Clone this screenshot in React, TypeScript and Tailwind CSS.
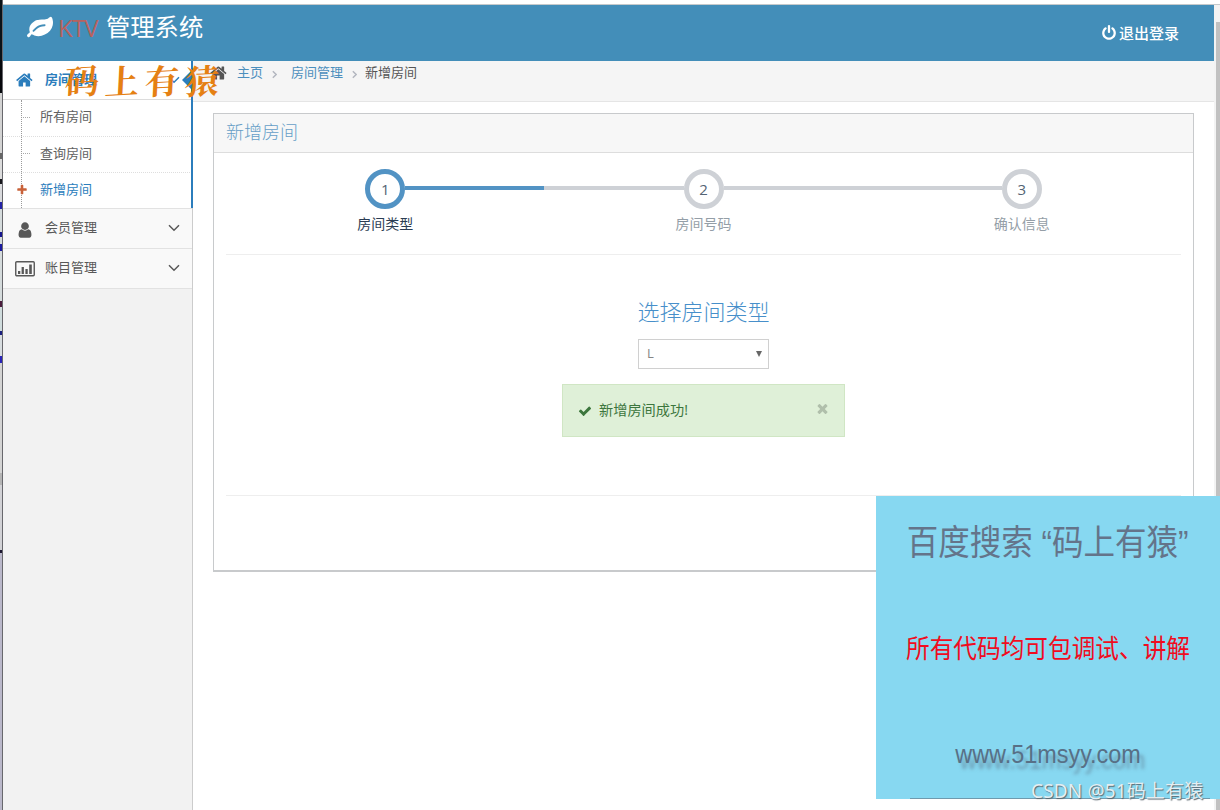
import React from "react";

const PATHS = {
  leaf: "M1280 704q0-26-19-45t-45-19q-172 0-318 49.5t-259.5 134-235.5 219.5q-19 21-19 45 0 26 19 45t45 19q24 0 45-19 27-24 74-71t67-66q137-124 268.5-176t313.5-52q26 0 45-19t19-45zm512-198q0 95-20 193-46 224-184.5 383t-357.5 268q-214 108-438 108-148 0-286-47-15-5-88-42t-96-37q-16 0-39.5 32t-45 70-52.5 70-60 32q-43 0-63.5-17.5t-45.5-59.5q-2-4-6-11t-5.5-10-3-9.5-1.5-13.5q0-35 31-73.5t68-65.5 68-56 31-48q0-4-14-38t-16-44q-9-51-9-104 0-115 43.5-220t119-184.5 170.5-139 204-95.5q55-18 145-25.5t179.5-9 178.5-6 163.5-24 113.5-56.5l29.5-29.5 29.5-28 27-20 36.5-16 43.5-4.5q39 0 70.5 46t47.5 112 24 124 8 96z",
  home: "M1408 992v480q0 26-19 45t-45 19h-384v-384h-256v384h-384q-26 0-45-19t-19-45v-480q0-1 .5-3t.5-3l575-474 575 474q1 2 1 6zm223-69l-62 74q-8 9-21 11h-3q-13 0-21-7l-692-577-692 577q-12 8-24 7-13-2-21-11l-62-74q-8-10-7-23.5t11-21.5l719-599q32-26 76-26t76 26l244 204v-195q0-14 9-23t23-9h192q14 0 23 9t9 23v408l219 182q10 8 11 21.5t-7 23.5z",
  user: "M1536 1399q0 109-62.5 187t-150.5 78h-854q-88 0-150.5-78t-62.5-187q0-85 8.5-160.5t31.5-152 58.5-131 94-89 134.5-34.5q131 128 313 128t313-128q76 0 134.5 34.5t94 89 58.5 131 31.5 152 8.5 160.5zm-256-887q0 159-112.5 271.5t-271.5 112.5-271.5-112.5-112.5-271.5 112.5-271.5 271.5-112.5 271.5 112.5 112.5 271.5z",
  plus: "M1600 736v192q0 40-28 68t-68 28h-416v416q0 40-28 68t-68 28h-192q-40 0-68-28t-28-68v-416h-416q-40 0-68-28t-28-68v-192q0-40 28-68t68-28h416v-416q0-40 28-68t68-28h192q40 0 68 28t28 68v416h416q40 0 68 28t28 68z",
  check: "M1671 566q0 40-28 68l-724 724-136 136q-28 28-68 28t-68-28l-136-136-362-362q-28-28-28-68t28-68l136-136q28-28 68-28t68 28l294 295 656-657q28-28 68-28t68 28l136 136q28 28 28 68z",
  times: "M1490 1322q0 40-28 68l-136 136q-28 28-68 28t-68-28l-294-294-294 294q-28 28-68 28t-68-28l-136-136q-28-28-28-68t28-68l294-294-294-294q-28-28-28-68t28-68l136-136q28-28 68-28t68 28l294 294 294-294q28-28 68-28t68 28l136 136q28 28 28 68t-28 68l-294 294 294 294q28 28 28 68z",
  power: "M1664 896q0 156-61 298t-164 245-245 164-298 61-298-61-245-164-164-245-61-298q0-182 80.5-343t226.5-270q43-32 95.5-25t83.5 50q32 42 24.5 94.5t-49.5 84.5q-98 74-151.5 181t-53.5 228q0 104 40.5 198.5t109.5 163.5 163.5 109.5 198.5 40.5 198.5-40.5 163.5-109.5 109.5-163.5 40.5-198.5q0-121-53.5-228t-151.5-181q-42-32-49.5-84.5t24.5-94.5q31-43 84-50t95 25q146 109 226.5 270t80.5 343zm-640-768v640q0 52-38 90t-90 38-90-38-38-90v-640q0-52 38-90t90-38 90 38 38 90z",
};

function Icon({ name, className }: { name: keyof typeof PATHS; className: string }) {
  return (
    <svg viewBox="0 0 1792 1792" fill="currentColor" className={`shrink-0 ${className}`}>
      <path d={PATHS[name]} />
    </svg>
  );
}

function ChartIcon() {
  return (
    <svg viewBox="0 0 20 16" className="h-4 w-5 shrink-0" fill="#585858">
      <rect x="0.75" y="0.75" width="18.5" height="14" rx="1" fill="none" stroke="#585858" strokeWidth="1.4" />
      <rect x="3" y="10" width="2.3" height="3" />
      <rect x="6.6" y="6" width="2.3" height="7" />
      <rect x="10.4" y="8" width="2.3" height="5" />
      <rect x="14.2" y="3.5" width="2.6" height="9.5" />
    </svg>
  );
}

function Angle({ dir, className }: { dir: "down" | "right"; className: string }) {
  return dir === "down" ? (
    <svg viewBox="0 0 12 8" className={className} fill="none" stroke="currentColor" strokeWidth="1.5">
      <path d="M1 1.2 6 6.2 11 1.2" />
    </svg>
  ) : (
    <svg viewBox="0 0 6 10" className={className} fill="none" stroke="currentColor" strokeWidth="1.7">
      <path d="M1 1 5 5 1 9" />
    </svg>
  );
}

/* Slice of the desktop windows visible behind the browser's left edge. */
const EDGE = [
  { h: 60, c: "bg-[#0a1218]" },
  { h: 33, c: "bg-[#06080c]" },
  { h: 60, c: "bg-[#d3d3d3]" },
  { h: 6, c: "bg-[#666666]" },
  { h: 20, c: "bg-[#dcdcdc]" },
  { h: 5, c: "bg-[#17171c]" },
  { h: 18, c: "bg-[#d9dadd]" },
  { h: 7, c: "bg-[#2423a8]" },
  { h: 23, c: "bg-[#d5dbdc]" },
  { h: 5, c: "bg-[#15158f]" },
  { h: 7, c: "bg-[#d5dbdc]" },
  { h: 7, c: "bg-[#1a1aa0]" },
  { h: 50, c: "bg-[#d5dbdc]" },
  { h: 6, c: "bg-[#4a1c3c]" },
  { h: 24, c: "bg-[#d0dcdd]" },
  { h: 4, c: "bg-[#1c2080]" },
  { h: 21, c: "bg-[#d8dde0]" },
  { h: 7, c: "bg-[#2a23b8]" },
  { h: 110, c: "bg-[#d4d4d4]" },
  { h: 12, c: "bg-[#b5b5b5]" },
  { h: 65, c: "bg-[#d2d2d6]" },
  { h: 3, c: "bg-[#1d1730]" },
  { h: 257, c: "bg-[#bab8ca]" },
];

const SUBMENU = [
  { label: "所有房间", active: false },
  { label: "查询房间", active: false },
  { label: "新增房间", active: true },
];

const STEPS = [
  { n: 1, label: "房间类型", left: "bg-transparent", right: "bg-[#5293c4]" },
  { n: 2, label: "房间号码", left: "bg-[#ced1d6]", right: "bg-[#ced1d6]" },
  { n: 3, label: "确认信息", left: "bg-[#ced1d6]", right: "bg-transparent" },
];

function Navbar() {
  return (
    <header className="flex h-14 shrink-0 items-start justify-between bg-[#438eb9] pl-6 pr-[35px] text-white">
      <div className="flex h-[45px] items-center text-2xl">
        <Icon name="leaf" className="h-[26px] w-[26px]" />
        <span className="ml-[5px] w-[42px] tracking-[-0.8px] text-[#b8625f]">KTV</span>
        <span className="ml-[6px] text-[24.3px]">管理系统</span>
      </div>
      <a className="flex h-14 items-center gap-[2px] text-[15px] font-medium">
        <Icon name="power" className="h-[16px] w-[16px]" />
        <span>退出登录</span>
      </a>
    </header>
  );
}

function Sidebar() {
  return (
    <aside className="relative flex w-[190px] shrink-0 flex-col border-r border-[#cccccc] bg-[#f2f2f2] text-[13px] text-[#585858]">
      <div className="relative flex h-[39px] items-center border-b border-[#dcdcdc] bg-white pl-[13px] font-bold text-[#2b7dbc]">
        <Icon name="home" className="h-[18px] w-[18px]" />
        <span className="-mt-[2px] ml-[11px] leading-4">房间管理</span>
        <Angle dir="down" className="ml-auto mr-3 h-2 w-3" />
        <svg viewBox="0 0 10 20" className="absolute right-0 top-[9px] h-5 w-[10px]" fill="#2b7dbc">
          <path d="M10 0 0 10 10 20Z" />
        </svg>
      </div>
      <ul className="relative bg-white">
        <li className="absolute bottom-0 left-[18px] top-0 border-l border-dotted border-[#9a9a9a]" />
        {SUBMENU.map((item, i) => (
          <li
            key={item.label}
            className={`flex h-9 items-center pb-[2px] ${i > 0 ? "border-t border-dotted border-[#dedede]" : ""} ${item.active ? "text-[#2b7dbc]" : "text-[#616161]"}`}
          >
            {item.active ? (
              <Icon name="plus" className="relative ml-[13px] mr-[12px] h-[12px] w-[12px] text-[#c86139]" />
            ) : (
              <span className="ml-[20px] mr-[10px] w-[7px] border-t border-dotted border-[#aaaaaa]" />
            )}
            <span>{item.label}</span>
          </li>
        ))}
      </ul>
      <div className="absolute -right-px top-0 h-[147px] w-[2px] bg-[#2b7dbc]" />
      <div className="flex h-10 items-center border-t border-[#e2e2e2] bg-[#f9f9f9] pl-[13px]">
        <Icon name="user" className="mt-[2px] h-[18px] w-[18px]" />
        <span className="-mt-px ml-[11px]">会员管理</span>
        <Angle dir="down" className="-mt-px ml-auto mr-3 h-2 w-3" />
      </div>
      <div className="flex h-[41px] items-center border-y border-[#e2e2e2] bg-[#f9f9f9] pl-3">
        <ChartIcon />
        <span className="-mt-px ml-[10px]">账目管理</span>
        <Angle dir="down" className="-mt-px ml-auto mr-3 h-2 w-3" />
      </div>
    </aside>
  );
}

function Breadcrumbs() {
  return (
    <nav className="h-[41px] border-b border-[#e5e5e5] bg-[#f5f5f5] pl-[17px] text-[13px] text-[#4c8fbd]">
      <div className="flex h-[24px] items-center">
        <Icon name="home" className="h-[18px] w-[18px] text-[#555555]" />
        <span className="ml-[9px]">主页</span>
        <Angle dir="right" className="ml-[9px] mt-[3px] h-[9px] w-[5px] text-[#b2b6bf]" />
        <span className="ml-[14px]">房间管理</span>
        <Angle dir="right" className="ml-[9px] mt-[3px] h-[9px] w-[5px] text-[#b2b6bf]" />
        <span className="ml-[8px] text-[#555555]">新增房间</span>
      </div>
    </nav>
  );
}

function Wizard() {
  return (
    <section className="ml-5 mt-[11px] flex h-[459px] w-[981px] flex-col border border-b-2 border-[#c8cacc] bg-white">
      <h1 className="h-[39px] shrink-0 border-b border-[#dddddd] bg-[#f7f7f7] pl-3 text-lg font-light leading-[37px] text-[#669fc7]">
        新增房间
      </h1>
      <div className="mx-3 flex flex-1 flex-col">
        <ol className="flex h-[102px] shrink-0 border-b border-[#eeeeee] pt-4">
          {STEPS.map((s) => (
            <li key={s.n} className="flex flex-1 flex-col items-center">
              <div className="flex w-full items-center">
                <span className={`-mt-[2px] h-1 flex-1 ${s.left}`} />
                <span
                  className={`flex h-10 w-10 items-center justify-center rounded-full border-[5px] bg-white text-[15px] text-[#546474] ${s.n === 1 ? "border-[#5293c4]" : "border-[#ced1d6]"}`}
                >
                  {s.n}
                </span>
                <span className={`-mt-[2px] h-1 flex-1 ${s.right}`} />
              </div>
              <span className={`mt-[5px] text-sm leading-5 ${s.n === 1 ? "text-[#2b3d53]" : "text-[#949ea7]"}`}>
                {s.label}
              </span>
            </li>
          ))}
        </ol>
        <div className="flex h-[241px] shrink-0 flex-col items-center border-b border-[#eeeeee] pt-[40px]">
          <h2 className="text-[22px] font-light leading-8 text-[#478fca]">选择房间类型</h2>
          <div className="mt-[12px] flex h-[30px] w-[131px] items-center justify-between border border-[#d0d0d0] pl-2 pr-[6px] text-[13px] text-[#858585]">
            <span>L</span>
            <svg viewBox="0 0 6 6" className="h-[6px] w-[6px]" fill="#666666">
              <path d="M0 0H6L3 6Z" />
            </svg>
          </div>
          <div className="mt-[15px] flex h-[53px] w-[283px] items-center border border-[#d0e6c4] bg-[#dff0d8] pl-[15px] pr-[14px] text-sm text-[#3c763d]">
            <Icon name="check" className="h-[14px] w-[14px]" />
            <span className="ml-[7px] text-[14.2px]">新增房间成功!</span>
            <Icon name="times" className="-mt-[5px] ml-auto h-[15px] w-[15px] text-[#b0bfab]" />
          </div>
        </div>
      </div>
    </section>
  );
}

function Promo() {
  return (
    <div className="absolute left-[876px] top-[496px] flex h-[303px] w-[344px] flex-col items-center whitespace-nowrap bg-[#87d8f1]">
      <p className="mt-[24px] h-[46px] origin-center scale-x-[0.9] font-['Liberation_Sans','Noto_Sans_CJK_SC',sans-serif] text-[35px] leading-[46px] text-[#64748a]">
        百度搜索 “码上有猿”
      </p>
      <p className="mt-[63px] h-[38px] scale-x-[0.91] text-[26px] leading-[38px] text-[#f00c20]">
        所有代码均可包调试、讲解
      </p>
      <p className="mt-[68px] h-[38px] scale-x-[0.9] font-['Liberation_Sans',sans-serif] text-[26px] leading-[38px] text-[#587086] [text-shadow:5px_6px_4px_#58708699]">
        www.51msyy.com
      </p>
    </div>
  );
}

export default function App() {
  return (
    <div className="relative flex h-[810px] w-[1220px] flex-col overflow-hidden bg-white font-['Open_Sans','Noto_Sans_CJK_SC',sans-serif]">
      <div className="h-[5px] shrink-0 border-b border-[#c5c9cb] bg-white" />
      <div className="-mt-[5px] flex flex-1">
        <div className="flex w-[3px] shrink-0 flex-col border-r border-[#68686d]">
          {EDGE.map((e, i) => (
            <div key={i} className={`shrink-0 ${e.c}`} style={{ height: e.h }} />
          ))}
        </div>
        <div className="mt-[5px] flex w-[1211px] shrink-0 flex-col">
          <Navbar />
          <div className="flex flex-1">
            <Sidebar />
            <main className="flex-1 bg-white">
              <Breadcrumbs />
              <Wizard />
            </main>
          </div>
        </div>
        <div className="mt-[5px] flex w-[6px] flex-col bg-[#f3f3f3] pl-[2px]">
          <div className="mt-[17px] flex-1 bg-[#c1c1c1]" />
        </div>
      </div>

      <div className="absolute left-[65px] top-[58px] flex -skew-x-6 gap-[6px] font-['Noto_Serif_CJK_SC','Noto_Sans_CJK_SC',serif] text-[34px] font-bold leading-[44px] text-[#e58013]">
        <span className="-rotate-3">码</span>
        <span className="-rotate-3">上</span>
        <span className="-rotate-3">有</span>
        <span className="-rotate-3">猿</span>
      </div>

      <Promo />
      <div className="absolute left-[910px] top-[798px] h-px w-[300px] bg-[#6f9aae]" />
      <p className="absolute left-[1031px] top-[779px] whitespace-nowrap font-['Noto_Sans','Noto_Sans_CJK_SC',sans-serif] text-[19px] leading-6 tracking-[0.15px] text-[#e3eef2] [text-shadow:1px_1px_1px_#59666e]">
        CSDN @51码上有猿
      </p>
    </div>
  );
}
